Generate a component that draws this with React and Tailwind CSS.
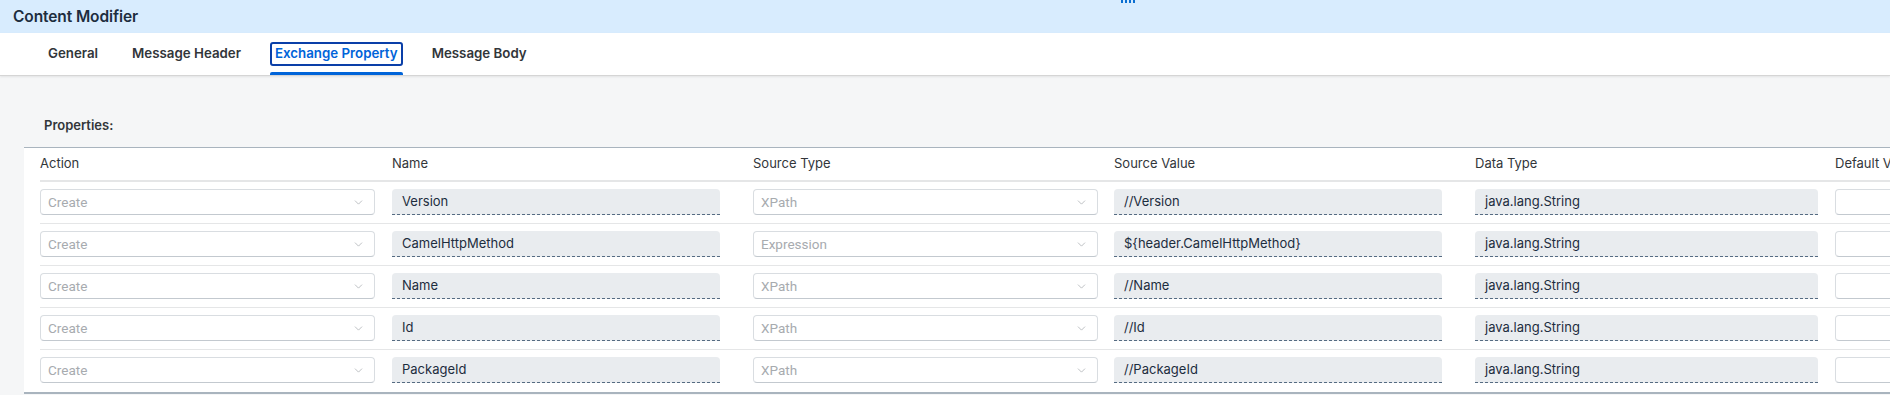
import { ChevronDown } from "lucide-react";

const tabs = ["General", "Message Header", "Exchange Property", "Message Body"];

const rows = [
  { name: "Version", type: "XPath", value: "//Version" },
  { name: "CamelHttpMethod", type: "Expression", value: "${header.CamelHttpMethod}" },
  { name: "Name", type: "XPath", value: "//Name" },
  { name: "Id", type: "XPath", value: "//Id" },
  { name: "PackageId", type: "XPath", value: "//PackageId" },
];

// placeholder-looking select
function Select({ text, className }) {
  return (
    <div
      className={`h-[26px] shrink-0 bg-white border border-[#d9dde1] border-b-[#c3c9cf] rounded-[4px] flex items-center justify-between pl-[7px] pr-[9px] ${className}`}
    >
      <span className="text-[13.5px] text-[#a7abaf] font-['Roboto',sans-serif]">{text}</span>
      <ChevronDown size={13} strokeWidth={1.2} className="text-[#9a9fa4]" />
    </div>
  );
}

function Field({ text, className }) {
  return (
    <div
      className={`h-[26px] shrink-0 bg-[#e9ecef] rounded-t-[4px] border-b border-dashed border-[#556b82] flex items-center pl-[10px] text-[13px] text-[#1d2d3e] ${className}`}
    >
      {text}
    </div>
  );
}

export default function App() {
  return (
    <div className="relative w-[1890px] h-[395px] overflow-hidden bg-[#f5f6f7] font-['Inter',sans-serif]">
      {/* grip at the top */}
      <div className="absolute top-0 left-[1121px] flex gap-[2px]">
        <div className="w-[2px] h-[3px] bg-[#0a6ed1]" />
        <div className="w-[2px] h-[3px] bg-[#0a6ed1]" />
        <div className="w-[2px] h-[3px] bg-[#0a6ed1]" />
        <div className="w-[2px] h-[3px] bg-[#0a6ed1]" />
      </div>

      <div className="h-[33px] bg-[#d8ecfe] flex items-center pl-[13px]">
        <h1 className="text-[15.5px] font-semibold text-[#1d2d3e] tracking-[-0.1px]">Content Modifier</h1>
      </div>

      <div className="h-[43px] bg-white border-b border-[#d5d5d5] shadow-[0_1px_2px_rgba(0,0,0,0.08)] flex items-stretch pl-[43px] gap-6">
        {tabs.map((t) => {
          const active = t === "Exchange Property";
          return (
            <div key={t} className="relative flex items-center">
              <span
                className={`px-[3px] h-[24px] flex items-center rounded-[3px] border-2 text-[13.3px] font-semibold ${
                  active ? "border-[#0a3fa8] text-[#0064d9]" : "border-transparent text-[#32363a]"
                }`}
              >
                {t}
              </span>
              {active && <div className="absolute left-0 right-0 bottom-0 h-[3px] rounded-t-[2px] bg-[#0064d9]" />}
            </div>
          );
        })}
      </div>

      <div className="pt-[40px]">
        <p className="pl-[44px] text-[13px] leading-[18px] font-semibold text-[#32363a]">Properties:</p>

        <div className="mt-[13px] ml-[24px] bg-white border-t border-b-2 border-[#a9b4be] pl-4">
          <div className="h-[34px] border-b-2 border-[#e5e6e7] flex items-center text-[13px] text-[#32363a] whitespace-nowrap">
            <div className="w-[352px] shrink-0">Action</div>
            <div className="w-[361px] shrink-0">Name</div>
            <div className="w-[361px] shrink-0">Source Type</div>
            <div className="w-[361px] shrink-0">Source Value</div>
            <div className="w-[360px] shrink-0">Data Type</div>
            <div className="shrink-0">Default Value</div>
          </div>

          {rows.map((r, i) => (
            <div
              key={r.name}
              className={`h-[42px] pt-[7px] flex items-start ${i < rows.length - 1 ? "border-b border-[#e5e6e7]" : ""}`}
            >
              <div className="w-[352px] shrink-0">
                <Select text="Create" className="w-[335px]" />
              </div>
              <div className="w-[361px] shrink-0">
                <Field text={r.name} className="w-[328px]" />
              </div>
              <div className="w-[361px] shrink-0">
                <Select text={r.type} className="w-[345px]" />
              </div>
              <div className="w-[361px] shrink-0">
                <Field text={r.value} className="w-[328px]" />
              </div>
              <div className="w-[360px] shrink-0">
                <Field text="java.lang.String" className="w-[343px]" />
              </div>
              <div className="shrink-0">
                <div className="w-[120px] h-[26px] bg-white border border-[#d9dde1] border-b-[#c3c9cf] rounded-[4px]" />
              </div>
            </div>
          ))}
        </div>
      </div>
    </div>
  );
}
